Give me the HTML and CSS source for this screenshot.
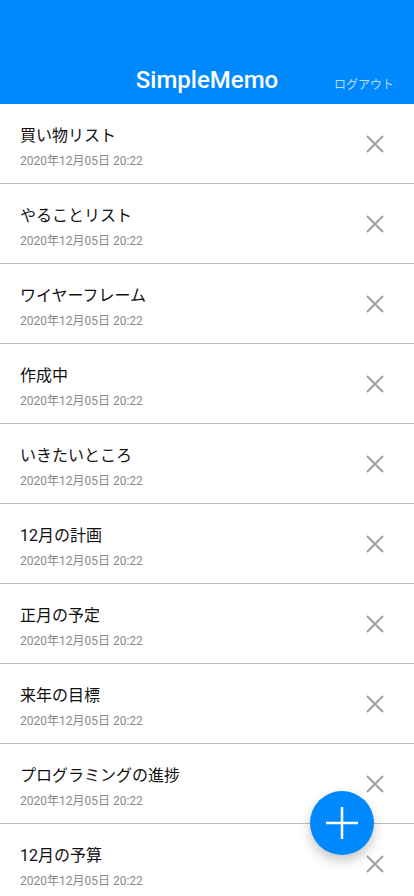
FILE: index.html
```html
<!DOCTYPE html>
<html lang="ja">
<head>
<meta charset="utf-8">
<title>SimpleMemo</title>
<link rel="stylesheet" href="styles.css">
</head>
<body>
<header class="header">
  <div class="header-spacer"></div>
  <h1 class="header-title">SimpleMemo</h1>
  <a class="logout">ログアウト</a>
</header>
<ul class="memo-list">
  <li class="memo"><div class="memo-text"><div class="memo-title">買い物リスト</div><div class="memo-date">2020年12月05日 20:22</div></div><button class="del"><svg viewBox="0 0 18 18" width="18" height="18"><path d="M1 1L17 17M17 1L1 17"/></svg></button></li>
  <li class="memo"><div class="memo-text"><div class="memo-title">やることリスト</div><div class="memo-date">2020年12月05日 20:22</div></div><button class="del"><svg viewBox="0 0 18 18" width="18" height="18"><path d="M1 1L17 17M17 1L1 17"/></svg></button></li>
  <li class="memo"><div class="memo-text"><div class="memo-title">ワイヤーフレーム</div><div class="memo-date">2020年12月05日 20:22</div></div><button class="del"><svg viewBox="0 0 18 18" width="18" height="18"><path d="M1 1L17 17M17 1L1 17"/></svg></button></li>
  <li class="memo"><div class="memo-text"><div class="memo-title">作成中</div><div class="memo-date">2020年12月05日 20:22</div></div><button class="del"><svg viewBox="0 0 18 18" width="18" height="18"><path d="M1 1L17 17M17 1L1 17"/></svg></button></li>
  <li class="memo"><div class="memo-text"><div class="memo-title">いきたいところ</div><div class="memo-date">2020年12月05日 20:22</div></div><button class="del"><svg viewBox="0 0 18 18" width="18" height="18"><path d="M1 1L17 17M17 1L1 17"/></svg></button></li>
  <li class="memo"><div class="memo-text"><div class="memo-title">12月の計画</div><div class="memo-date">2020年12月05日 20:22</div></div><button class="del"><svg viewBox="0 0 18 18" width="18" height="18"><path d="M1 1L17 17M17 1L1 17"/></svg></button></li>
  <li class="memo"><div class="memo-text"><div class="memo-title">正月の予定</div><div class="memo-date">2020年12月05日 20:22</div></div><button class="del"><svg viewBox="0 0 18 18" width="18" height="18"><path d="M1 1L17 17M17 1L1 17"/></svg></button></li>
  <li class="memo"><div class="memo-text"><div class="memo-title">来年の目標</div><div class="memo-date">2020年12月05日 20:22</div></div><button class="del"><svg viewBox="0 0 18 18" width="18" height="18"><path d="M1 1L17 17M17 1L1 17"/></svg></button></li>
  <li class="memo"><div class="memo-text"><div class="memo-title">プログラミングの進捗</div><div class="memo-date">2020年12月05日 20:22</div></div><button class="del"><svg viewBox="0 0 18 18" width="18" height="18"><path d="M1 1L17 17M17 1L1 17"/></svg></button></li>
  <li class="memo"><div class="memo-text"><div class="memo-title">12月の予算</div><div class="memo-date">2020年12月05日 20:22</div></div><button class="del"><svg viewBox="0 0 18 18" width="18" height="18"><path d="M1 1L17 17M17 1L1 17"/></svg></button></li>
</ul>
<button class="fab"><svg viewBox="0 0 34 34" width="34" height="34"><path d="M17 1V33M1 17H33"/></svg></button>
</body>
</html>
```

FILE: styles.css
```css
* { box-sizing: border-box; }
html, body {
  margin: 0;
  padding: 0;
  background: #ffffff;
  font-family: Roboto, "Noto Sans CJK JP", sans-serif;
  color: #000;
  overflow: hidden;
  height: 896px;
}
.header {
  height: 104px;
  background: #0088ff;
  display: grid;
  grid-template-columns: 1fr auto 1fr;
  align-items: end;
  padding: 0 20px 12px 20px;
}
.header-title {
  margin: 0;
  font-size: 24px;
  line-height: 24px;
  font-weight: 500;
  color: #ffffff;
}
.logout {
  justify-self: end;
  font-size: 12px;
  line-height: 14px;
  color: rgba(255,255,255,0.72);
  margin-bottom: 0;
}
.memo-list {
  list-style: none;
  margin: 0;
  padding: 0;
}
.memo {
  height: 80px;
  border-bottom: 1px solid #bdbdbd;
  display: flex;
  align-items: center;
  justify-content: space-between;
  padding: 0 19px 0 20px;
}
.memo-text {
  display: flex;
  flex-direction: column;
  gap: 6px;
  padding-top: 6px;
}
.memo-title {
  font-size: 16px;
  line-height: 22px;
  color: #111;
}
.memo-date {
  font-size: 12px;
  line-height: 16px;
  color: #8a8a8a;
}
.del {
  width: 40px;
  height: 40px;
  border: none;
  background: none;
  padding: 0;
  display: flex;
  align-items: center;
  justify-content: center;
}
.del svg path {
  stroke: #a0a0a0;
  stroke-width: 2;
  fill: none;
}
.fab {
  position: fixed;
  right: 40px;
  bottom: 41px;
  width: 64px;
  height: 64px;
  border-radius: 50%;
  border: none;
  background: #0088ff;
  box-shadow: 0 6px 12px rgba(0,0,0,0.22);
  display: flex;
  align-items: center;
  justify-content: center;
  padding: 0;
}
.fab svg path {
  stroke: #ffffff;
  stroke-width: 2.5;
  fill: none;
}
```
